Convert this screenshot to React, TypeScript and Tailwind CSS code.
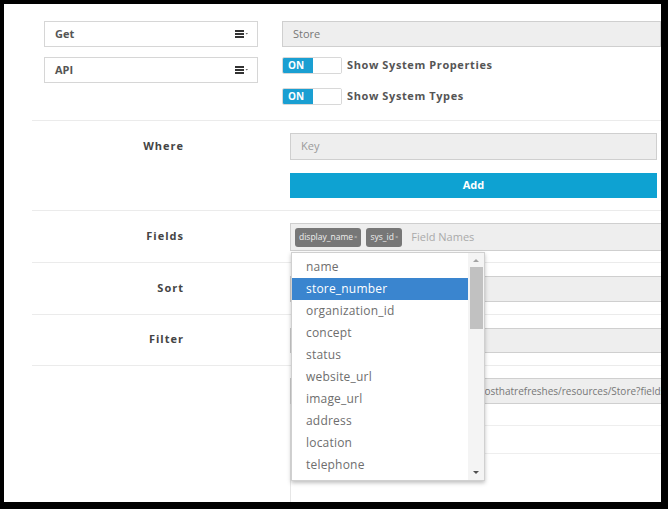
import React from 'react';

const font = { fontFamily: '"Open Sans", "Liberation Sans", sans-serif' };

const ListIcon: React.FC = () => (
  <svg width="14" height="8" viewBox="0 0 14 8" className="shrink-0">
    <rect x="0" y="0" width="9" height="2" fill="#333" />
    <rect x="0" y="3" width="9" height="2" fill="#333" />
    <rect x="0" y="6" width="9" height="2" fill="#333" />
    <path d="M10.5 3 L13 3 L11.75 4.5 Z" fill="#666" />
  </svg>
);

const SelectBox: React.FC<{ label: string }> = ({ label }) => (
  <div className="flex items-center justify-between h-[26px] w-[214px] border border-[#d6d6d6] bg-white pl-[10px] pr-[8px]">
    <span className="text-[11px] font-bold text-[#555]">{label}</span>
    <ListIcon />
  </div>
);

const Toggle: React.FC<{ label: string }> = ({ label }) => (
  <div className="flex items-center h-[17px]">
    <div className="flex h-[17px] w-[60px] border border-[#d8d8d8] rounded-[2px] overflow-hidden">
      <div className="w-[30px] bg-[#1a9fd2] text-white text-[10px] font-bold flex items-center pl-[5px]">ON</div>
      <div className="flex-1 bg-white" />
    </div>
    <span className="ml-[5px] text-[11px] font-bold text-[#555] tracking-[0.6px]">{label}</span>
  </div>
);

const Row: React.FC<{ label: string; children: React.ReactNode; labelPad: string }> = ({
  label,
  children,
  labelPad,
}) => (
  <div className="flex ml-[28px] border-b border-[#ebebeb]">
    <div className={`w-[152px] shrink-0 text-right text-[11px] font-bold text-[#444] tracking-[1px] ${labelPad}`}>
      {label}
    </div>
    <div className="ml-[106px] flex-1">{children}</div>
  </div>
);

const ITEMS = [
  'name',
  'store_number',
  'organization_id',
  'concept',
  'status',
  'website_url',
  'image_url',
  'address',
  'location',
  'telephone',
];

const Dropdown: React.FC = () => (
  <div className="absolute left-[287px] top-[248px] w-[194px] h-[229px] bg-white border border-[#d0d0d0] shadow-[0_2px_4px_rgba(0,0,0,0.25)] flex">
    <div className="flex-1 pt-[3px]">
      {ITEMS.map((item) => (
        <div
          key={item}
          className={`h-[22px] flex items-center pl-[14px] text-[12px] tracking-[0.2px] ${
            item === 'store_number' ? 'bg-[#3a85cf] text-white' : 'text-[#6e6e6e]'
          }`}
        >
          {item}
        </div>
      ))}
    </div>
    <div className="w-[16px] bg-[#f4f4f4] flex flex-col items-center">
      <svg width="8" height="12" viewBox="0 0 8 12" className="mt-[2px]">
        <path d="M1 7 L4 4 L7 7 Z" fill="#a3a3a3" />
      </svg>
      <div className="w-[13px] h-[62px] bg-[#c1c1c1]" />
      <div className="flex-1" />
      <svg width="8" height="12" viewBox="0 0 8 12" className="mb-[2px]">
        <path d="M1 5 L7 5 L4 8 Z" fill="#505050" />
      </svg>
    </div>
  </div>
);

const Tag: React.FC<{ text: string }> = ({ text }) => (
  <span className="h-[19px] bg-[#777] rounded-[3px] text-[#eee] text-[8.5px] flex items-center px-[4px]">
    {text}
    <span className="text-[6px] ml-[1px] text-[#ccc]">×</span>
  </span>
);

const App: React.FC = () => {
  return (
    <div className="w-[668px] h-[509px] bg-black pt-[4px] pl-[4px] pr-[7px] pb-[7px]" style={font}>
      <div className="relative w-full h-full bg-white overflow-hidden">
        {/* Top section */}
        <div className="ml-[28px] border-b border-[#ebebeb] h-[117px] flex pt-[17px]">
          <div className="ml-[12px] flex flex-col gap-[10px]">
            <SelectBox label="Get" />
            <SelectBox label="API" />
          </div>
          <div className="ml-[24px] flex flex-col w-[400px]">
            <div className="h-[26px] border border-[#cfcfcf] bg-[#eeeeee] flex items-center pl-[10px] text-[11px] text-[#777]">
              Store
            </div>
            <div className="mt-[10px] flex flex-col gap-[14px]">
              <Toggle label="Show System Properties" />
              <Toggle label="Show System Types" />
            </div>
          </div>
        </div>

        {/* Where */}
        <Row label="Where" labelPad="pt-[17px]">
          <div className="pt-[12px] pb-[12px] pr-[4px] flex flex-col gap-[13px]">
            <div className="h-[27px] border border-[#cfcfcf] bg-[#eeeeee] flex items-center pl-[10px] text-[11px] text-[#9a9a9a]">
              Key
            </div>
            <div className="h-[25px] bg-[#0ea2d2] flex items-center justify-center text-[11px] font-bold text-white">
              Add
            </div>
          </div>
        </Row>

        {/* Fields */}
        <Row label="Fields" labelPad="pt-[17px]">
          <div className="pt-[12px] pb-[11px]">
            <div className="h-[28px] w-[400px] border border-[#cfcfcf] bg-[#eeeeee] flex items-center pl-[4px] gap-[5px]">
              <Tag text="display_name" />
              <Tag text="sys_id" />
              <span className="ml-[4px] text-[11px] text-[#aaa]">Field Names</span>
            </div>
          </div>
        </Row>

        {/* Sort */}
        <Row label="Sort" labelPad="pt-[17px]">
          <div className="pt-[13px] pb-[12px]">
            <div className="h-[26px] w-[400px] border border-[#cfcfcf] bg-[#eeeeee]" />
          </div>
        </Row>

        {/* Filter */}
        <Row label="Filter" labelPad="pt-[16px]">
          <div className="pt-[13px] pb-[12px]">
            <div className="h-[25px] w-[400px] border border-[#cfcfcf] bg-[#eeeeee]" />
          </div>
        </Row>

        {/* Request URL */}
        <div className="ml-[286px]">
          <div className="pt-[12px]">
            <div className="h-[26px] w-[420px] border border-[#cfcfcf] bg-[#eeeeee] flex items-center pl-[4px] text-[10px] text-[#777] whitespace-nowrap overflow-hidden">
              http://localhost:8080/api/v1/apps/data/hosthatrefreshes/resources/Store?fields=display_name,sys_id
            </div>
          </div>
          <div className="border-l border-[#e6e6e6] h-[120px]">
            <div className="h-[22px] border-b border-[#eeeeee]" />
            <div className="h-[28px] border-b border-[#eeeeee]" />
          </div>
        </div>

        <Dropdown />
      </div>
    </div>
  );
};

export default App;
